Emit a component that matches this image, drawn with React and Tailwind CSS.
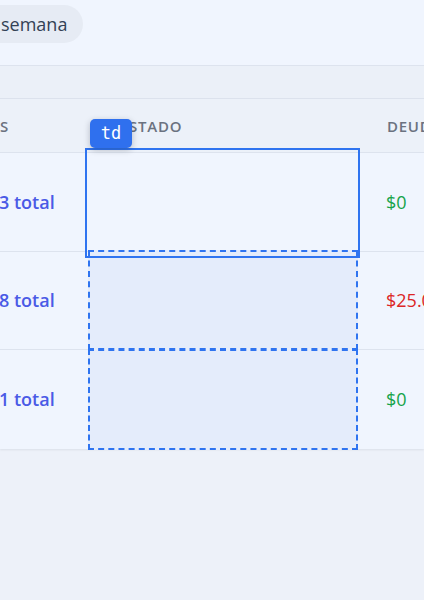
import React from "react";

const rows = [
  { total: "3 total", debt: "$0", color: "text-[#16a34a]", h: "h-[99px]" },
  { total: "8 total", debt: "$25.00", color: "text-[#dc2626]", h: "h-[98px]" },
  { total: "1 total", debt: "$0", color: "text-[#16a34a]", h: "h-[99px]" },
];

export default function App() {
  return (
    <div
      className="relative w-[424px] h-[600px] overflow-hidden bg-[#edf1f9]"
      style={{ fontFamily: '"Open Sans", "Noto Sans", sans-serif' }}
    >
      {/* top bar */}
      <div className="h-[66px] bg-[#f0f5fe] border-b border-[#dde3ee] pt-[5px]">
        <div className="ml-[-20px] inline-flex h-[38px] items-center rounded-full bg-[#e6ebf4] pl-[21px] pr-[16px] text-[18px] font-medium text-[#334155]">
          semana
        </div>
      </div>
      <div className="h-[33px] bg-[#ebf0f8] border-b border-[#dde3ee]" />

      {/* table */}
      <div className="shadow-[0_1px_2px_rgba(15,23,42,0.08)]">
        <div className="flex h-[54px] items-center bg-[#ecf1f9] border-b border-[#dde3ee] pt-[1px] text-[15px] font-semibold uppercase tracking-[0.05em] text-[#6b7280]">
          <div className="w-[88px] shrink-0">S</div>
          <div className="w-[270px] shrink-0 pl-[32px]">Estado</div>
          <div className="pl-[29px]">Deuda</div>
        </div>
        {rows.map((r, i) => (
          <div
            key={i}
            className={`flex ${r.h} items-center bg-[#f0f5fe] ${i < 2 ? "border-b border-[#dde3ee]" : ""}`}
          >
            <div className="w-[88px] shrink-0 text-[18px] font-semibold text-[#4a5ae6] ml-[-1px]">
              {r.total}
            </div>
            <div className="w-[270px] shrink-0 self-stretch" />
            <div className={`pl-[29px] text-[18px] font-medium whitespace-nowrap ${r.color}`}>
              {r.debt}
            </div>
          </div>
        ))}
      </div>

      {/* overlays */}
      <div className="absolute left-[88px] top-[250px] w-[270px] h-[100px] border-2 border-dashed border-[#2f74f0] bg-[#e4ecfb]" />
      <div className="absolute left-[88px] top-[349px] w-[270px] h-[101px] border-2 border-dashed border-[#2f74f0] bg-[#e4ecfb]" />
      <div className="absolute left-[85px] top-[148px] w-[275px] h-[110px] border-2 border-[#2f74f0]" />
      <div
        className="absolute left-[90px] top-[119px] flex h-[29px] w-[42px] items-center justify-center rounded-[5px] bg-[#2f70ee] text-[17px] text-white shadow-[0_2px_6px_rgba(15,23,42,0.25)]"
        style={{ fontFamily: '"DejaVu Sans Mono", monospace' }}
      >
        td
      </div>
    </div>
  );
}
